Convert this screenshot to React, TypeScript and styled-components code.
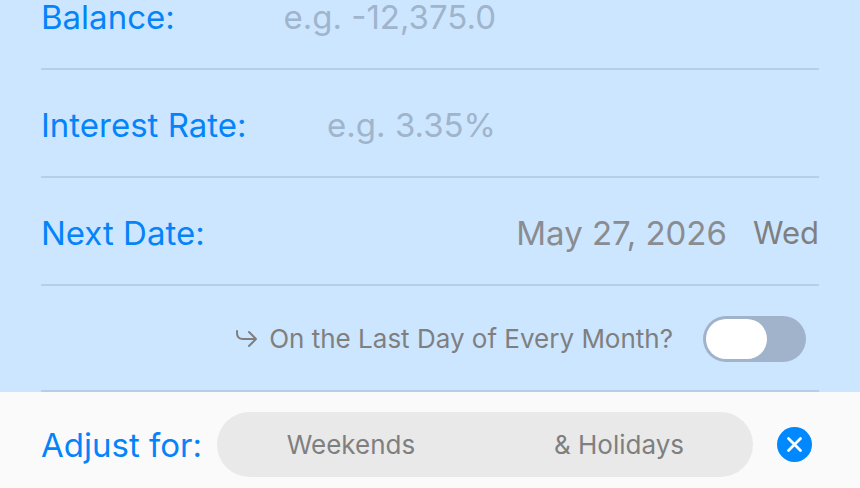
import React, { useState } from 'react';
import styled, { createGlobalStyle } from 'styled-components';

const GlobalStyle = createGlobalStyle`
  *, *::before, *::after { box-sizing: border-box; }
  body {
    margin: 0;
    background: #fafafa;
    font-family: Inter, "Liberation Sans", sans-serif;
    color: #7f7f80;
  }
  button, input { font: inherit; color: inherit; }
`;

const Form = styled.form`
  display: flex;
  flex-direction: column;
`;

const Fields = styled.section`
  padding: 0 41px;
  background: #cde6ff;
`;

const Row = styled.div<{ $compact?: boolean }>`
  display: flex;
  align-items: center;
  padding: ${p => (p.$compact ? '0 0 34px' : '38px 0 34px')};
  border-bottom: 2px solid #b5cfeb;
`;

const Label = styled.label`
  flex: none;
  font-size: 33px;
  line-height: 34px;
  color: #0584f9;
  white-space: nowrap;
`;

const ValueInput = styled.input`
  flex: 1;
  min-width: 0;
  height: 44px;
  margin: -5px 323px -5px 0;
  padding: 0;
  border: 0;
  outline: 0;
  background: transparent;
  font-size: 33px;
  text-align: right;
  &::placeholder { color: #a0b4cb; opacity: 1; }
`;

const DateButton = styled.button`
  display: flex;
  align-items: center;
  gap: 26px;
  margin-left: auto;
  padding: 0;
  border: 0;
  background: none;
  font-size: 33px;
  line-height: 34px;
  color: #8a8c90;
  white-space: nowrap;
`;

const Weekday = styled.span`
  font-size: 31px;
  color: #7f7f80;
`;

const SwitchRow = styled(Row)`
  justify-content: flex-end;
  padding: 30px 13px 28px 0;
`;

const SwitchLabel = styled.label`
  display: flex;
  align-items: center;
  gap: 11px;
  margin-right: 30px;
  font-size: 26px;
  line-height: 32px;
  white-space: nowrap;
`;

const Switch = styled.input`
  appearance: none;
  display: flex;
  flex: none;
  width: 103px;
  height: 46px;
  margin: 0;
  padding: 3px;
  border-radius: 23px;
  background: #a0b3cb;
  &::before {
    content: "";
    width: 61px;
    height: 40px;
    border-radius: 20px;
    background: #fff;
  }
  &:checked { justify-content: flex-end; background: #0088ff; }
`;

const AdjustBar = styled.section`
  display: flex;
  align-items: center;
  padding: 20px 48px 11px 41px;
`;

const Segments = styled.div`
  display: grid;
  grid-template-columns: 1fr 1fr;
  flex: 1;
  height: 65px;
  margin: 0 24px 0 15px;
  border-radius: 33px;
  background: #e9e9e9;
`;

const Segment = styled.button`
  padding: 0;
  border: 0;
  border-radius: 33px;
  background: none;
  font-size: 26px;
`;

const ClearButton = styled.button`
  display: grid;
  width: 35px;
  height: 35px;
  padding: 0;
  border: 0;
  background: none;
`;

export default function App() {
  const [lastDay, setLastDay] = useState(false);
  return (
    <>
      <GlobalStyle />
      <Form>
        <Fields>
          <Row $compact>
            <Label htmlFor="balance">Balance:</Label>
            <ValueInput id="balance" placeholder="e.g. -12,375.0" />
          </Row>
          <Row>
            <Label htmlFor="rate">Interest Rate:</Label>
            <ValueInput id="rate" placeholder="e.g. 3.35%" />
          </Row>
          <Row>
            <Label htmlFor="date">Next Date:</Label>
            <DateButton id="date" type="button">May 27, 2026<Weekday>Wed</Weekday></DateButton>
          </Row>
          <SwitchRow>
            <SwitchLabel htmlFor="last-day">
              <svg width="22" height="20" viewBox="0 0 22 20" fill="none" stroke="currentColor" strokeWidth="2" strokeLinecap="round" strokeLinejoin="round" aria-hidden="true">
                <path d="M1 2v2q0 6 6 6h13M13 3l7 7-7 7" />
              </svg>
              On the Last Day of Every Month?
            </SwitchLabel>
            <Switch id="last-day" type="checkbox" role="switch" checked={lastDay} onChange={e => setLastDay(e.target.checked)} />
          </SwitchRow>
        </Fields>
        <AdjustBar>
          <Label as="span">Adjust for:</Label>
          <Segments role="group" aria-label="Adjust for">
            <Segment type="button">Weekends</Segment>
            <Segment type="button">&amp; Holidays</Segment>
          </Segments>
          <ClearButton type="button" aria-label="Clear">
            <svg width="35" height="35" viewBox="0 0 35 35" aria-hidden="true">
              <circle cx="17.5" cy="17.5" r="17.5" fill="#0088ff" />
              <path d="M11.5 11.5l12 12M23.5 11.5l-12 12" stroke="#fff" strokeWidth="2.8" strokeLinecap="round" />
            </svg>
          </ClearButton>
        </AdjustBar>
      </Form>
    </>
  );
}
